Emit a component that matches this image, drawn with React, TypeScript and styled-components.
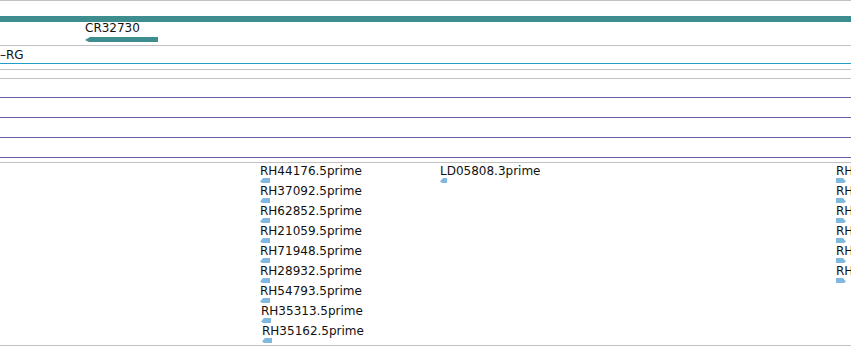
import styled, { createGlobalStyle } from "styled-components";

const colors = {
  GRID: "#c2c2c2",
  TEAL: "#3f8e8f",
  CYAN: "#1ea0c6",
  PURPLE: "#6c5ea6",
  EST: "#80b8df",
  TEXT: "#111111",
};

const GlobalStyle = createGlobalStyle`
  html, body {
    margin: 0;
    padding: 0;
    background: #ffffff;
  }
  body {
    font-family: "DejaVu Sans", "Liberation Sans", sans-serif;
    font-size: 12px;
    color: ${colors.TEXT};
    overflow: hidden;
  }
`;

type Est = { name: string; x: number; y: number; dir: "left" | "right"; w?: number };

const leftEsts: Est[] = [
  { name: "RH44176.5prime", x: 260, y: 0, dir: "left" },
  { name: "RH37092.5prime", x: 260, y: 20, dir: "left" },
  { name: "RH62852.5prime", x: 260, y: 40, dir: "left" },
  { name: "RH21059.5prime", x: 260, y: 60, dir: "left" },
  { name: "RH71948.5prime", x: 260, y: 80, dir: "left" },
  { name: "RH28932.5prime", x: 260, y: 100, dir: "left" },
  { name: "RH54793.5prime", x: 260, y: 120, dir: "left" },
  { name: "RH35313.5prime", x: 261, y: 140, dir: "left" },
  { name: "RH35162.5prime", x: 262, y: 160, dir: "left" },
  { name: "LD05808.3prime", x: 440, y: 0, dir: "left", w: 7 },
  { name: "RH10422.5prime", x: 836, y: 0, dir: "right" },
  { name: "RH10577.5prime", x: 836, y: 20, dir: "right" },
  { name: "RH15238.5prime", x: 836, y: 40, dir: "right" },
  { name: "RH20918.5prime", x: 836, y: 60, dir: "right" },
  { name: "RH33019.5prime", x: 836, y: 80, dir: "right" },
  { name: "RH44591.5prime", x: 836, y: 100, dir: "right" },
];

const EstArrow = ({ dir, w = 10 }: { dir: "left" | "right"; w?: number }) => {
  const pts =
    dir === "left"
      ? `0,3.5 3,0 ${w},0 ${w},5 2,5`
      : `0,0 ${w - 3},0 ${w},3.5 ${w - 2},5 0,5`;
  return (
    <svg width={w} height={5} viewBox={`0 0 ${w} 5`} style={{ display: "block" }}>
      <polygon points={pts} fill={colors.EST} />
    </svg>
  );
};

const App = () => {
  return (
    <>
      <GlobalStyle />
      <Styled.Browser>
        <Styled.Track $height={45} $line={colors.GRID}>
          <Styled.GeneBar />
          <Styled.Feature style={{ left: 85, top: 20 }}>
            <Styled.Label>CR32730</Styled.Label>
            <Styled.Transcript>
              <svg width={73} height={5} viewBox="0 0 73 5" style={{ display: "block" }}>
                <polygon points="0,3 5,0 73,0 73,5 4,5" fill={colors.TEAL} />
              </svg>
            </Styled.Transcript>
          </Styled.Feature>
        </Styled.Track>
        <Styled.Track $height={18} $line={colors.GRID}>
          <Styled.TrackName>–RG</Styled.TrackName>
        </Styled.Track>
        <Styled.Track $height={6} $line={colors.CYAN} />
        <Styled.Track $height={9} $line={colors.GRID} />
        <Styled.Track $height={19} $line={colors.GRID} />
        <Styled.Track $height={20} $line={colors.PURPLE} />
        <Styled.Track $height={20} $line={colors.PURPLE} />
        <Styled.Track $height={20} $line={colors.PURPLE} />
        <Styled.Track $height={5} $line={colors.PURPLE} />
        <Styled.Track $height={183} $line={colors.GRID}>
          {leftEsts.map((est) => (
            <Styled.Feature key={est.name} style={{ left: est.x, top: est.y + 1 }}>
              <Styled.Label>{est.name}</Styled.Label>
              <EstArrow dir={est.dir} w={est.w} />
            </Styled.Feature>
          ))}
        </Styled.Track>
        <Styled.Track $height={1} $line={colors.GRID} />
      </Styled.Browser>
    </>
  );
};

const Styled = {
  Browser: styled.div`
    width: 851px;
    height: 346px;
    display: flex;
    flex-direction: column;
    overflow: hidden;
  `,

  Track: styled.div<{ $height: number; $line: string }>`
    position: relative;
    box-sizing: border-box;
    height: ${(p) => p.$height}px;
    flex: 0 0 auto;
    border-top: 1px solid ${(p) => p.$line};
    overflow: hidden;
  `,

  GeneBar: styled.div`
    margin-top: 15px;
    height: 6px;
    background-color: ${colors.TEAL};
  `,

  TrackName: styled.div`
    padding-top: 2px;
    line-height: 14px;
    white-space: nowrap;
  `,

  Feature: styled.div`
    position: absolute;
    display: flex;
    flex-direction: column;
    align-items: flex-start;
  `,

  Label: styled.span`
    line-height: 14px;
    white-space: nowrap;
  `,

  Transcript: styled.div`
    margin-top: 2px;
  `,
};

export default App;
